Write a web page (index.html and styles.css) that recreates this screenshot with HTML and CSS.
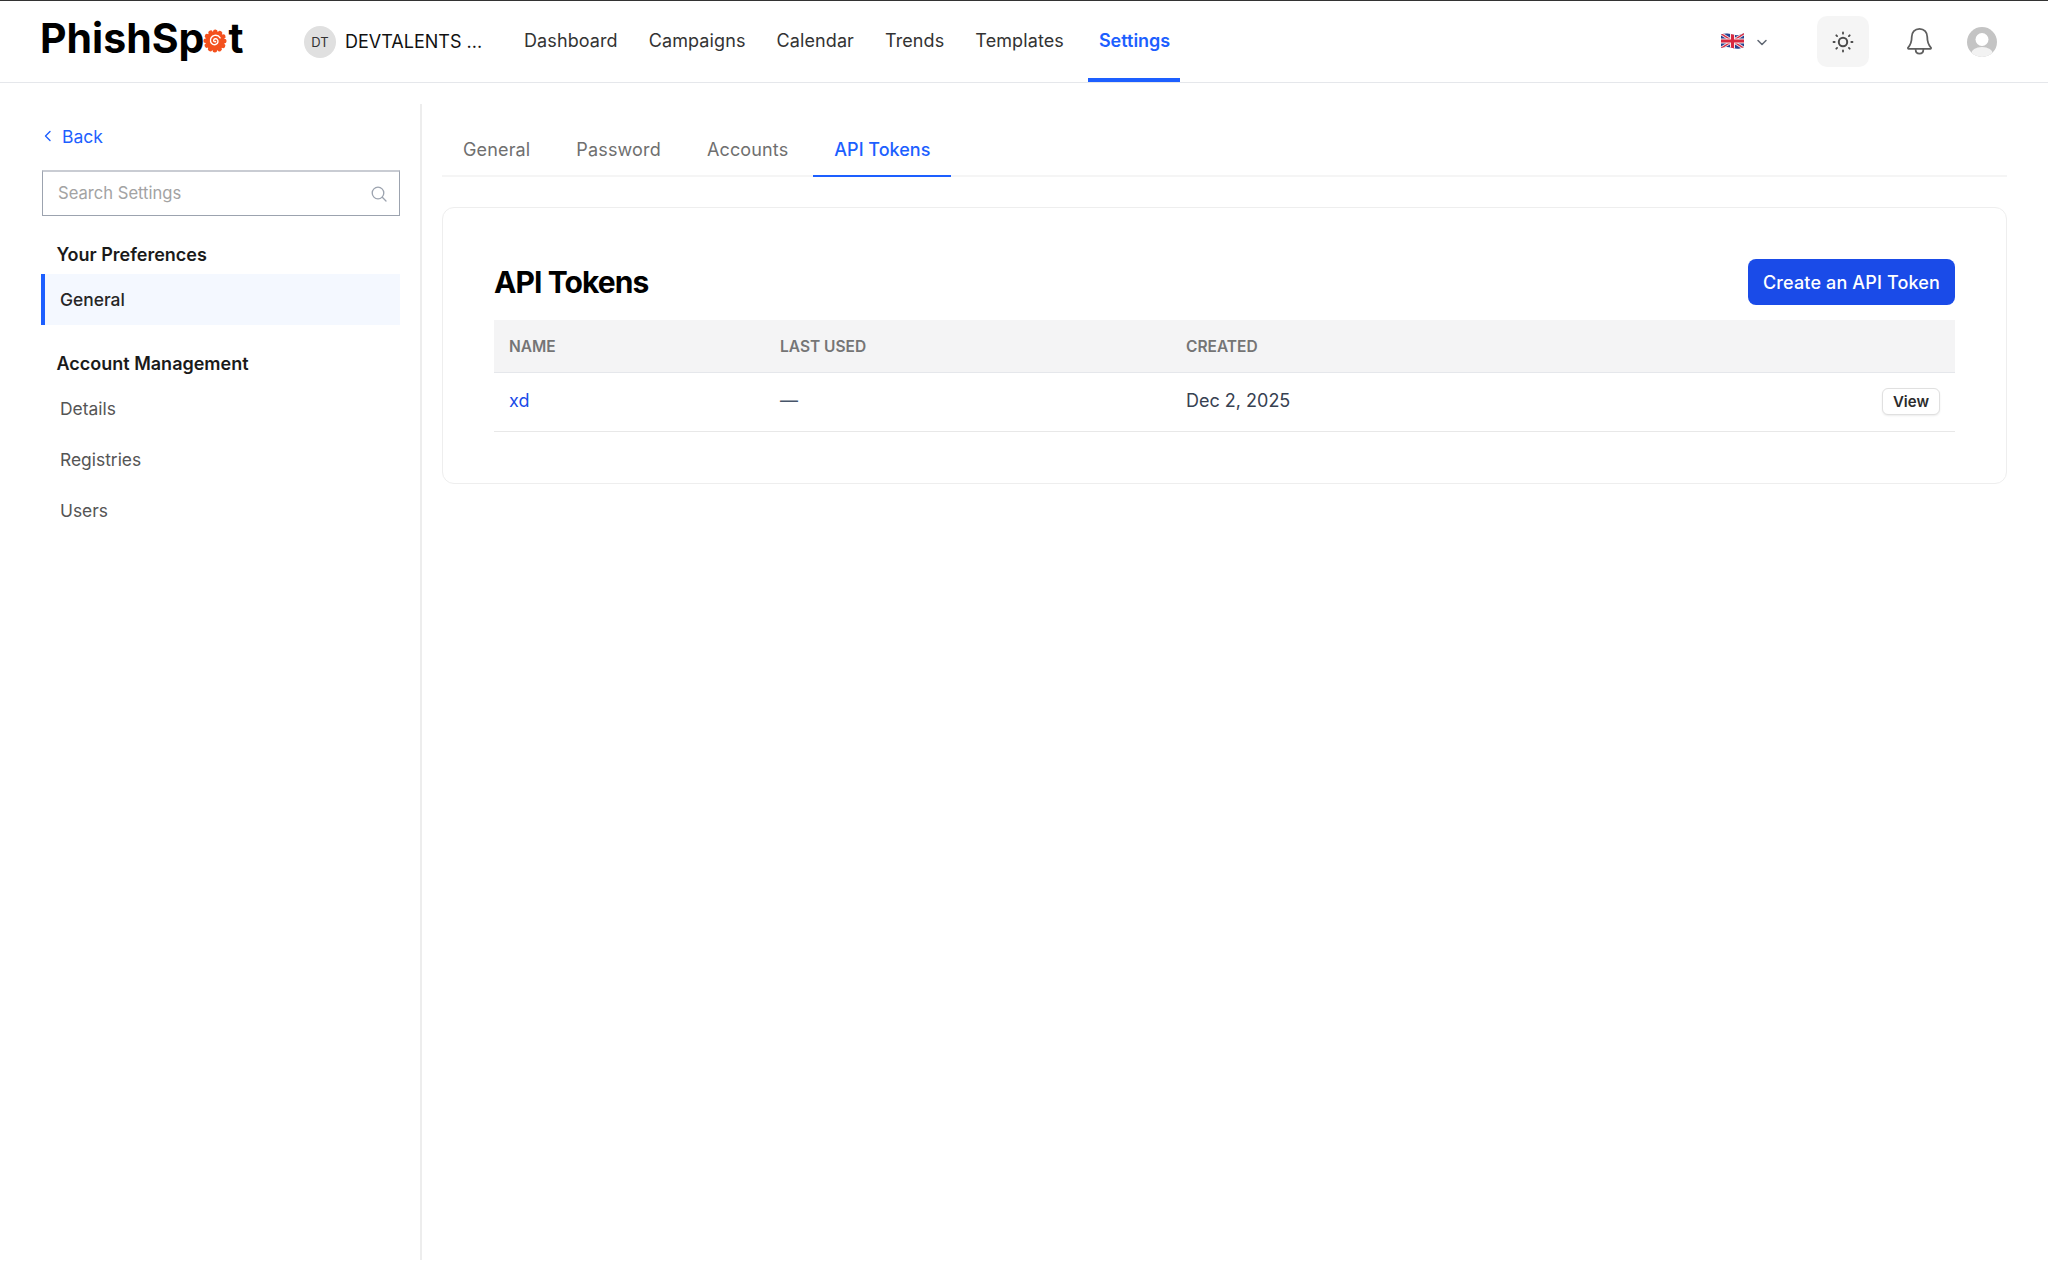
FILE: index.html

```html
<!DOCTYPE html>
<html lang="en">
<head>
    <meta charset="UTF-8">
    <title>API Tokens</title>
    <link rel="stylesheet" href="styles.css">
</head>
<body>
    <header class="topbar">
        <div class="logo">
            <span>PhishSp</span>
            <svg class="logo-spot" width="24" height="24" viewBox="0 0 24 24">
                <circle cx="12" cy="12" r="9.6" fill="#f4511e"/>
                <circle cx="12" cy="12" r="9.3" fill="none" stroke="#f4511e" stroke-width="4.6" stroke-linecap="round" stroke-dasharray="0.1 4.77"/>
                <path d="M12.600 12.600c-1 .7-2.200-.3-1.900-1.500.4-1.500 2.500-1.800 3.500-.7 1.400 1.400.8 3.900-.9 4.800-2.200 1.200-5-.1-5.700-2.500-.8-2.900 1.100-5.800 4-6.300 2.200-.4 4.400.6 5.500 2.500" fill="none" stroke="#fff" stroke-width="1.400" stroke-linecap="round"/>
            </svg>
            <span>t</span>
        </div>
        <div class="org">
            <span class="org-badge">DT</span>
            <span class="org-name">DEVTALENTS ...</span>
        </div>
        <nav class="mainnav">
            <a href="#">Dashboard</a>
            <a href="#">Campaigns</a>
            <a href="#">Calendar</a>
            <a href="#">Trends</a>
            <a href="#">Templates</a>
            <a href="#" class="active">Settings</a>
        </nav>
        <div class="topbar-right">
            <div class="lang">
                <svg class="flag" width="25" height="18" viewBox="0 0 25 18">
                    <defs>
                        <clipPath id="flagClip"><path d="M1 2.500c4-1.600 7-1.200 11.500 0s7 1 11.500-1.500v14c-4 2-7 2.200-11.500 1s-7.500-1.300-11.500 0z"/></clipPath>
                    </defs>
                    <g clip-path="url(#flagClip)">
                        <rect width="25" height="18" fill="#27408f"/>
                        <path d="M0 1l25 16M25 1L0 17" stroke="#f4e9ea" stroke-width="3"/>
                        <path d="M0 1l25 16M25 1L0 17" stroke="#d8283f" stroke-width="1.300"/>
                        <path d="M12.500 0v18M0 9h25" stroke="#f4e9ea" stroke-width="5"/>
                        <path d="M12.500 0v18M0 9h25" stroke="#d8283f" stroke-width="3"/>
                    </g>
                </svg>
                <svg width="14" height="14" viewBox="0 0 14 14">
                    <path d="M3 5.500L7 9.500l4-4" fill="none" stroke="#5f6672" stroke-width="1.500" stroke-linecap="round" stroke-linejoin="round"/>
                </svg>
            </div>
            <div class="theme-btn">
                <svg width="24" height="24" viewBox="0 0 24 24" fill="none" stroke="#4b4b4b" stroke-linecap="round">
                    <circle cx="12" cy="12" r="4.200" stroke-width="2"/>
                    <path d="M12 2.500v1.200M12 20.300v1.200M2.500 12h1.200M20.300 12h1.200M5.300 5.300l.8.8M17.900 17.900l.8.8M5.300 18.700l.8-.8M17.900 6.100l.8-.8" stroke-width="1.800"/>
                </svg>
            </div>
            <svg class="bell" width="29" height="31" viewBox="0 0 26 28" fill="none" stroke="#5f5f5f" stroke-width="1.600" stroke-linejoin="round" stroke-linecap="round">
                <path d="M13 2.500c-4.300 0-7 3.300-7 7.300 0 5.400-1.500 7.800-3.300 9.700-.4.500-.1 1.100.5 1.100h19.600c.6 0 .9-.6.500-1.100-1.800-1.900-3.300-4.300-3.300-9.700 0-4-2.700-7.300-7-7.300z"/>
                <path d="M9.500 21c0 2.500 1.500 4 3.500 4s3.500-1.500 3.500-4"/>
            </svg>
            <svg class="user-pic" width="30" height="30" viewBox="0 0 30 30">
                <clipPath id="userClip"><circle cx="15" cy="15" r="15"/></clipPath>
                <g clip-path="url(#userClip)">
                    <rect width="30" height="30" fill="#c4c4c4"/>
                    <circle cx="15" cy="12.500" r="6.500" fill="#fff"/>
                    <ellipse cx="15" cy="27" rx="11" ry="7" fill="#f2f2f2"/>
                </g>
            </svg>
        </div>
    </header>

    <div class="layout">
        <aside class="sidebar">
            <a href="#" class="back">
                <svg width="10" height="12" viewBox="0 0 10 12"><path d="M7 1.500L2.500 6 7 10.500" fill="none" stroke="#1d5fff" stroke-width="1.400" stroke-linecap="round" stroke-linejoin="round"/></svg>
                Back
            </a>
            <div class="search">
                <span>Search Settings</span>
                <svg width="18" height="18" viewBox="0 0 18 18" fill="none" stroke="#9ca3af" stroke-width="1.300" stroke-linecap="round">
                    <circle cx="8" cy="8" r="5.800"/>
                    <path d="M12.300 12.300l3.700 3.700"/>
                </svg>
            </div>
            <h4 class="side-heading">Your Preferences</h4>
            <a href="#" class="side-link selected">General</a>
            <h4 class="side-heading second">Account Management</h4>
            <a href="#" class="side-link">Details</a>
            <a href="#" class="side-link">Registries</a>
            <a href="#" class="side-link">Users</a>
        </aside>

        <main class="content">
            <div class="tabs">
                <a href="#">General</a>
                <a href="#">Password</a>
                <a href="#">Accounts</a>
                <a href="#" class="active">API Tokens</a>
            </div>
            <section class="card">
                <div class="card-head">
                    <h1>API Tokens</h1>
                    <button class="btn-primary">Create an API Token</button>
                </div>
                <table class="tokens">
                    <thead>
                        <tr>
                            <th class="col-name">Name</th>
                            <th class="col-used">Last Used</th>
                            <th>Created</th>
                            <th></th>
                        </tr>
                    </thead>
                    <tbody>
                        <tr>
                            <td><a href="#">xd</a></td>
                            <td class="dash">—</td>
                            <td>Dec 2, 2025</td>
                            <td class="actions"><button class="btn-small">View</button></td>
                        </tr>
                    </tbody>
                </table>
            </section>
        </main>
    </div>
</body>
</html>
```

FILE: styles.css

```css
* { box-sizing: border-box; }

body {
    margin: 0;
    font-family: Inter, "Noto Sans", sans-serif;
    background-color: #ffffff;
    color: #1f2937;
}

a { text-decoration: none; color: inherit; }

/* top bar */
.topbar {
    display: flex;
    align-items: center;
    height: 83px;
    padding-left: 40px;
    border-top: 1px solid #333333;
    border-bottom: 1px solid #e5e7eb;
}

.logo {
    display: flex;
    align-items: center;
    width: 264px;
    margin-top: -6px;
    font-size: 41px;
    font-weight: 700;
    color: #000000;
    line-height: 1;
}

.logo-spot { margin: 5px 1px 0 -1px; }

.org {
    display: flex;
    align-items: center;
    width: 209px;
}

.org-badge {
    display: flex;
    align-items: center;
    justify-content: center;
    width: 32px;
    height: 32px;
    margin-right: 9px;
    border-radius: 50%;
    background-color: #e0e0e0;
    color: #333333;
    font-size: 13px;
}

.org-name { font-size: 18px; color: #111111; white-space: nowrap; }

.mainnav { display: flex; align-self: stretch; }

.mainnav a {
    display: flex;
    align-items: center;
    padding: 2px 10px 0 11px;
    margin-right: 10px;
    font-size: 18px;
    letter-spacing: 0.1px;
    color: #333333;
    border-bottom: 4px solid transparent;
}

.mainnav a.active {
    margin-left: 4px;
    color: #1d5fff;
    font-weight: 600;
    letter-spacing: 0;
    border-bottom-color: #1d5fff;
}

.topbar-right {
    display: flex;
    align-items: center;
    margin-left: auto;
    padding-right: 51px;
}

.lang { display: flex; align-items: center; gap: 10px; margin-right: 48px; }

.flag { margin-top: -2px; }

.theme-btn {
    display: flex;
    align-items: center;
    justify-content: center;
    width: 52px;
    height: 51px;
    margin-right: 36px;
    border-radius: 10px;
    background-color: #f5f5f5;
}

.bell { margin-right: 33px; }

/* sidebar */
.layout { display: flex; padding-top: 21px; }

.sidebar {
    width: 422px;
    height: 1156px;
    padding: 0 20px 0 41px;
    border-right: 2px solid #ededed;
}

.back {
    display: flex;
    align-items: center;
    gap: 9px;
    height: 24px;
    margin: 20px 0 22px 2px;
    font-size: 17.500px;
    color: #1d5fff;
}

.search {
    display: flex;
    align-items: center;
    justify-content: space-between;
    height: 46px;
    margin-left: 1px;
    padding: 0 11px 0 15px;
    border: 1px solid #9ca3af;
    border-top: 2px solid #c9ccd3;
    font-size: 16.600px;
    color: #a3a3a3;
}

.search span { margin-top: -1px; }

.side-heading {
    margin: 27px 0 0 15.500px;
    height: 31px;
    font-size: 18px;
    font-weight: 600;
    line-height: 24px;
    color: #1a1a1a;
}

.side-heading.second { margin-top: 27px; }

.side-link {
    display: flex;
    align-items: center;
    height: 51px;
    padding-left: 19px;
    font-size: 17.400px;
    color: #555555;
}

.side-link.selected {
    padding-left: 15px;
    border-left: 4px solid #1d5fff;
    background-color: #f4f8ff;
    color: #262626;
    font-weight: 500;
}

/* tabs */
.content { flex: 1; padding: 0 41px 0 20px; }

.tabs {
    display: flex;
    height: 73px;
    padding-top: 1px;
    border-bottom: 2px solid #f5f5f5;
}

.tabs a {
    display: flex;
    align-items: center;
    height: 72px;
    padding: 19px 21px 0;
    margin-right: 4px;
    font-size: 18px;
    letter-spacing: 0.15px;
    color: #6f6f6f;
    border-bottom: 2px solid transparent;
}

.tabs a.active {
    margin-right: 0;
    color: #1d5fff;
    font-weight: 500;
    letter-spacing: 0;
    border-bottom-color: #1d5fff;
}

/* card */
.card {
    margin-top: 30px;
    height: 277px;
    padding: 51px;
    border: 1.500px solid #eeeeee;
    border-radius: 12px;
}

.card-head {
    display: flex;
    align-items: center;
    justify-content: space-between;
    margin-bottom: 15px;
}

.card-head h1 {
    margin: 0;
    font-size: 30px;
    font-weight: 700;
    letter-spacing: -0.9px;
    color: #000000;
}

.btn-primary {
    height: 46px;
    padding: 0 15px;
    font-family: inherit;
    font-size: 18px;
    font-weight: 500;
    letter-spacing: 0.15px;
    color: #ffffff;
    background-color: #1a4be8;
    border: none;
    border-radius: 8px;
}

.tokens { width: 100%; border-collapse: collapse; table-layout: fixed; }

.tokens th {
    height: 52px;
    padding: 1px 15px 0;
    text-align: left;
    font-size: 15.500px;
    font-weight: 600;
    text-transform: uppercase;
    color: #757575;
    background-color: #f4f4f5;
    border-bottom: 1px solid #e5e7eb;
}

.col-name { width: 271px; }
.col-used { width: 406px; }

.tokens td {
    height: 59px;
    padding: 0 15px 2px;
    font-size: 18px;
    color: #374151;
    border-bottom: 1.500px solid #e8e8e8;
}

.tokens td a { color: #1a4be8; }

.tokens .dash { color: #475569; }

.tokens .actions { padding-bottom: 0; text-align: right; }

.btn-small {
    height: 27px;
    padding: 0 10px;
    font-family: inherit;
    font-size: 15px;
    font-weight: 600;
    color: #2b2b2b;
    background-color: #ffffff;
    border: 1px solid #e0e0e0;
    border-radius: 6px;
    box-shadow: 0 1px 2px rgba(0, 0, 0, 0.08);
}
```
